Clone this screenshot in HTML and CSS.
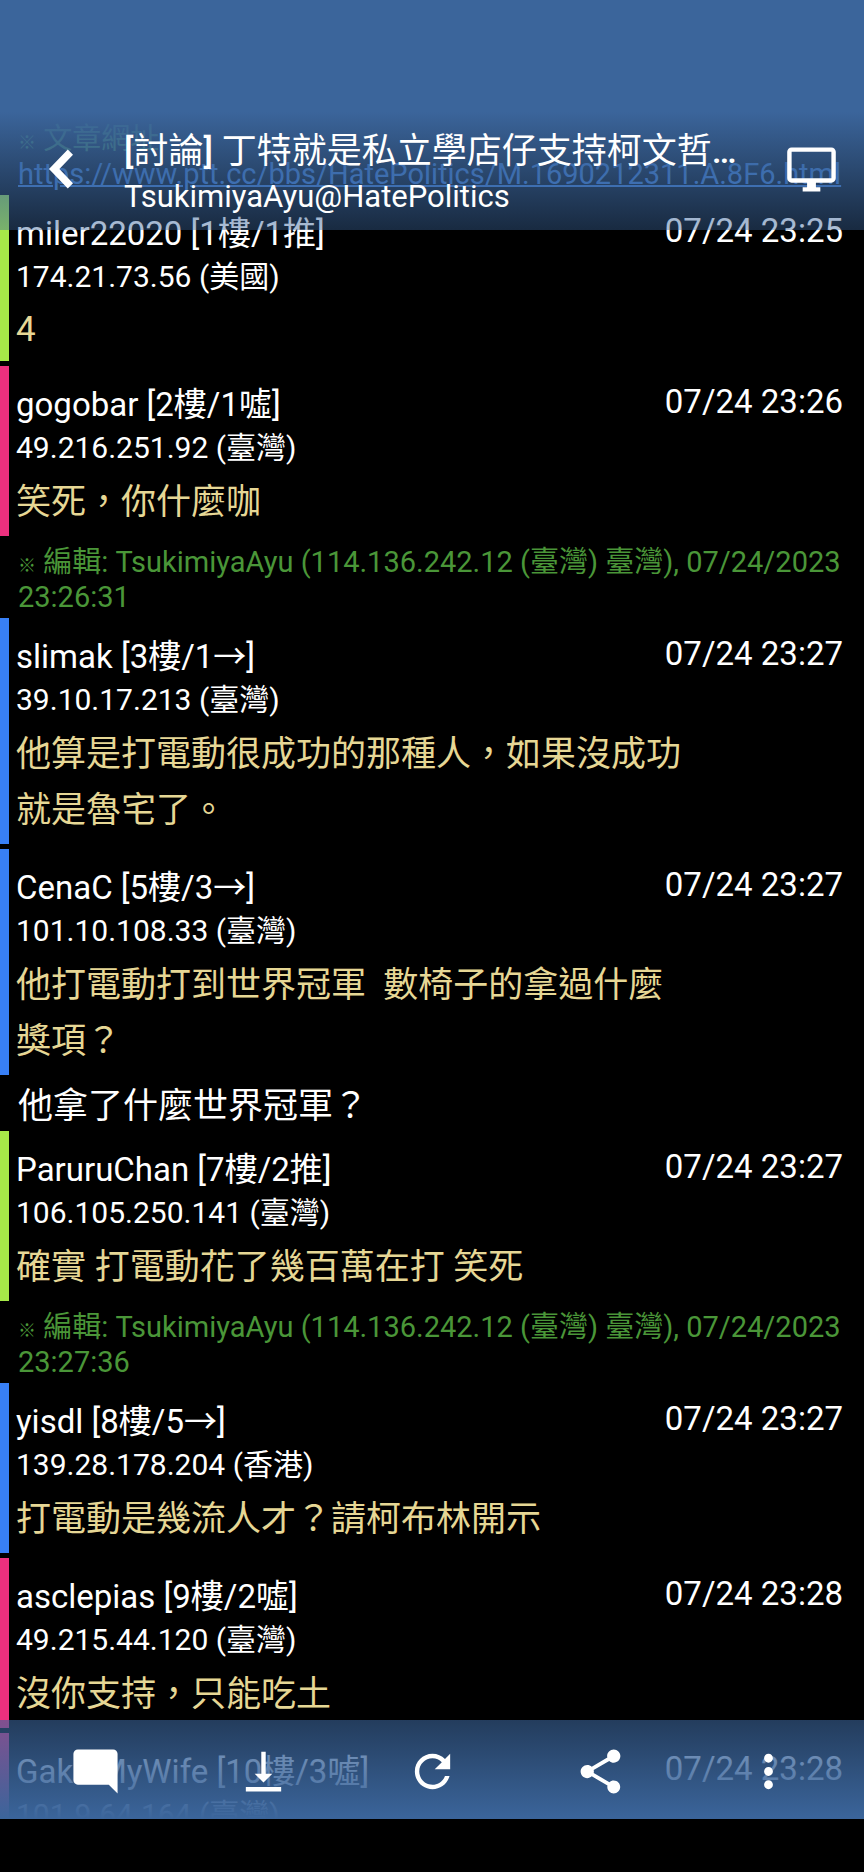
FILE: index.html
```html
<!DOCTYPE html>
<html lang="zh-Hant">
<head>
<meta charset="utf-8">
<meta name="viewport" content="width=device-width, initial-scale=1">
<title>[討論] 丁特就是私立學店仔支持柯文哲</title>
<link rel="stylesheet" href="styles.css">
</head>
<body>
<div class="app">
  <div class="screen">
    <main class="feed">
      <p class="note"><span class="mark">※</span> 文章網址<br><a class="note-link" href="https://www.ptt.cc/bbs/HatePolitics/M.1690212311.A.8F6.html">https://www.ptt.cc/bbs/HatePolitics/M.1690212311.A.8F6.html</a></p>

      <article class="comment push">
        <div class="meta"><span class="user">miler22020 [1樓/1推]</span><time class="time">07/24 23:25</time></div>
        <div class="ip">174.21.73.56 (美國)</div>
        <p class="text latin">4</p>
      </article>
      <article class="comment boo">
        <div class="meta"><span class="user">gogobar [2樓/1噓]</span><time class="time">07/24 23:26</time></div>
        <div class="ip">49.216.251.92 (臺灣)</div>
        <p class="text">笑死，你什麼咖</p>
      </article>
      <p class="note"><span class="mark">※</span> 編輯: TsukimiyaAyu (114.136.242.12 (臺灣) 臺灣), 07/24/2023 23:26:31</p>
      <article class="comment arrow">
        <div class="meta"><span class="user">slimak [3樓/1→]</span><time class="time">07/24 23:27</time></div>
        <div class="ip">39.10.17.213 (臺灣)</div>
        <p class="text">他算是打電動很成功的那種人，如果沒成功<br>就是魯宅了。</p>
      </article>
      <article class="comment arrow">
        <div class="meta"><span class="user">CenaC [5樓/3→]</span><time class="time">07/24 23:27</time></div>
        <div class="ip">101.10.108.33 (臺灣)</div>
        <p class="text">他打電動打到世界冠軍  數椅子的拿過什麼<br>獎項？</p>
      </article>
      <p class="reply">他拿了什麼世界冠軍？</p>
      <article class="comment push">
        <div class="meta"><span class="user">ParuruChan [7樓/2推]</span><time class="time">07/24 23:27</time></div>
        <div class="ip">106.105.250.141 (臺灣)</div>
        <p class="text">確實 打電動花了幾百萬在打 笑死</p>
      </article>
      <p class="note"><span class="mark">※</span> 編輯: TsukimiyaAyu (114.136.242.12 (臺灣) 臺灣), 07/24/2023 23:27:36</p>
      <article class="comment arrow">
        <div class="meta"><span class="user">yisdl [8樓/5→]</span><time class="time">07/24 23:27</time></div>
        <div class="ip">139.28.178.204 (香港)</div>
        <p class="text">打電動是幾流人才？請柯布林開示</p>
      </article>
      <article class="comment boo">
        <div class="meta"><span class="user">asclepias [9樓/2噓]</span><time class="time">07/24 23:28</time></div>
        <div class="ip">49.215.44.120 (臺灣)</div>
        <p class="text">沒你支持，只能吃土</p>
      </article>
      <article class="comment boo">
        <div class="meta"><span class="user">GakkiMyWife [10樓/3噓]</span><time class="time">07/24 23:28</time></div>
        <div class="ip">101.9.64.164 (臺灣)</div>
      </article>
    </main>

    <header class="topbar">
      <button class="icon-button back" type="button" aria-label="返回">
        <svg class="chevron" viewBox="8 6 7.41 12" aria-hidden="true"><path d="M15.41 7.6L13.8 6 8 12l5.8 6 1.61-1.6L11.2 12z"/></svg>
      </button>
      <div class="heading">
        <h1 class="title"><b class="bracket">[</b>討論<b class="bracket">]</b> 丁特就是私立學店仔支持柯文哲<b class="bracket">…</b></h1>
        <div class="subtitle">TsukimiyaAyu@HatePolitics</div>
      </div>
      <button class="icon-button" type="button" aria-label="網頁版">
        <svg class="icon" viewBox="0 0 24 24" aria-hidden="true"><path d="M21 2H3c-1.1 0-2 .9-2 2v12c0 1.1.9 2 2 2h7v2H8v2h8v-2h-2v-2h7c1.1 0 2-.9 2-2V4c0-1.1-.9-2-2-2zm0 14H3V4h18v12z"/></svg>
      </button>
    </header>

    <nav class="toolbar">
      <button class="tool" type="button" aria-label="留言">
        <svg class="icon" viewBox="0 0 24 24" aria-hidden="true"><path d="M21.99 4c0-1.1-.89-2-1.99-2H4c-1.1 0-2 .9-2 2v12c0 1.1.9 2 2 2h14l4 4-.01-18z"/></svg>
      </button>
      <button class="tool" type="button" aria-label="到底部">
        <svg class="icon" viewBox="0 0 24 24" aria-hidden="true"><path d="M16 13h-3V3h-2v10H8l4 4 4-4zM4 19v2h16v-2H4z"/></svg>
      </button>
      <button class="tool" type="button" aria-label="重新整理">
        <svg class="icon" viewBox="0 0 24 24" aria-hidden="true"><path d="M17.65 6.35C16.2 4.9 14.21 4 12 4c-4.42 0-7.99 3.58-7.99 8s3.57 8 7.99 8c3.73 0 6.84-2.55 7.73-6h-2.08c-.82 2.33-3.04 4-5.65 4-3.31 0-6-2.69-6-6s2.69-6 6-6c1.66 0 3.14.69 4.22 1.78L13 11h7V4l-2.35 2.35z"/></svg>
      </button>
      <button class="tool" type="button" aria-label="分享">
        <svg class="icon" viewBox="0 0 24 24" aria-hidden="true"><path d="M18 16.08c-.76 0-1.44.3-1.96.77L8.91 12.7c.05-.23.09-.46.09-.7s-.04-.47-.09-.7l7.05-4.11c.54.5 1.25.81 2.04.81 1.66 0 3-1.34 3-3s-1.34-3-3-3-3 1.34-3 3c0 .24.04.47.09.7L8.04 9.81C7.5 9.31 6.79 9 6 9c-1.66 0-3 1.34-3 3s1.34 3 3 3c.79 0 1.5-.31 2.04-.81l7.12 4.16c-.05.21-.08.43-.08.65 0 1.61 1.31 2.92 2.92 2.92 1.61 0 2.92-1.31 2.92-2.92s-1.31-2.92-2.92-2.92z"/></svg>
      </button>
      <button class="tool" type="button" aria-label="更多">
        <svg class="icon" viewBox="0 0 24 24" aria-hidden="true"><path d="M12 8c1.1 0 2-.9 2-2s-.9-2-2-2-2 .9-2 2 .9 2 2 2zm0 2c-1.1 0-2 .9-2 2s.9 2 2 2 2-.9 2-2-.9-2-2-2zm0 6c-1.1 0-2 .9-2 2s.9 2 2 2 2-.9 2-2-.9-2-2-2z"/></svg>
      </button>
    </nav>
  </div>
  <div class="system-nav"></div>
</div>
</body>
</html>
```
FILE: styles.css
```css
* {
  box-sizing: border-box;
}

body {
  margin: 0;
  background: #000;
  color: #fff;
  font-family: Roboto, "Noto Sans CJK TC", sans-serif;
}

p,
h1 {
  margin: 0;
}

button {
  display: flex;
  align-items: center;
  justify-content: center;
  padding: 0;
  border: 0;
  background: none;
  color: inherit;
}

svg {
  display: block;
  fill: currentColor;
}

.app {
  display: flex;
  flex-direction: column;
  height: 100vh;
}

.screen {
  position: relative;
  flex: 1;
  min-height: 0;
}

.system-nav {
  height: 53px;
}

.feed {
  height: 100%;
  padding-top: 113px;
  overflow-y: auto;
  scrollbar-width: none;
}

.note {
  padding: 9px 16px 3px 18px;
  color: #4a9638;
  font-size: 29px;
  line-height: 35px;
}

.mark {
  font-size: 18px;
  font-weight: 500;
  line-height: 1;
}

.note-link {
  color: #4380d8;
  text-decoration-thickness: 2px;
}

.comment {
  padding: 17px 21px 5px 7px;
  border-left: 9px solid;
}

.comment + .comment {
  margin-top: 5px;
}

.push {
  border-color: #a6e948;
}

.boo {
  border-color: #ec307e;
}

.arrow {
  border-color: #3880f6;
}

.meta {
  display: flex;
  justify-content: space-between;
  font-size: 33px;
  line-height: 44px;
}

.time {
  line-height: 38px;
}

.ip {
  font-size: 30px;
  line-height: 42px;
}

.text {
  padding-top: 6px;
  color: #e6d795;
  font-size: 35px;
  line-height: 56px;
  white-space: pre-wrap;
}

.latin {
  line-height: 52px;
}

.reply {
  padding: 7px 18px 0;
  font-size: 35px;
  line-height: 49px;
}

.topbar {
  position: absolute;
  top: 0;
  left: 0;
  right: 0;
  display: flex;
  height: 230px;
  padding-top: 108px;
  background: linear-gradient(#3b659b 112px, rgba(59, 101, 155, 0.42));
}

.icon-button {
  flex: none;
  width: 106px;
}

.back {
  width: 124px;
  padding-right: 2px;
}

.chevron {
  width: 24px;
  height: 40px;
}

.icon {
  width: 53px;
  height: 53px;
}

.heading {
  flex: 1;
  min-width: 0;
  padding-top: 21px;
  white-space: nowrap;
}

.title {
  overflow: hidden;
  font-size: 35px;
  font-weight: 400;
  line-height: 46px;
  text-overflow: ellipsis;
}

.bracket {
  font-weight: 500;
}

.subtitle {
  font-size: 31px;
  line-height: 43px;
}

.toolbar {
  position: absolute;
  bottom: 0;
  left: 0;
  right: 0;
  display: flex;
  height: 99px;
  padding: 4px 11px 0;
  background: linear-gradient(rgba(59, 101, 155, 0.6), #3b659b);
}

.tool {
  flex: 1;
}
```
